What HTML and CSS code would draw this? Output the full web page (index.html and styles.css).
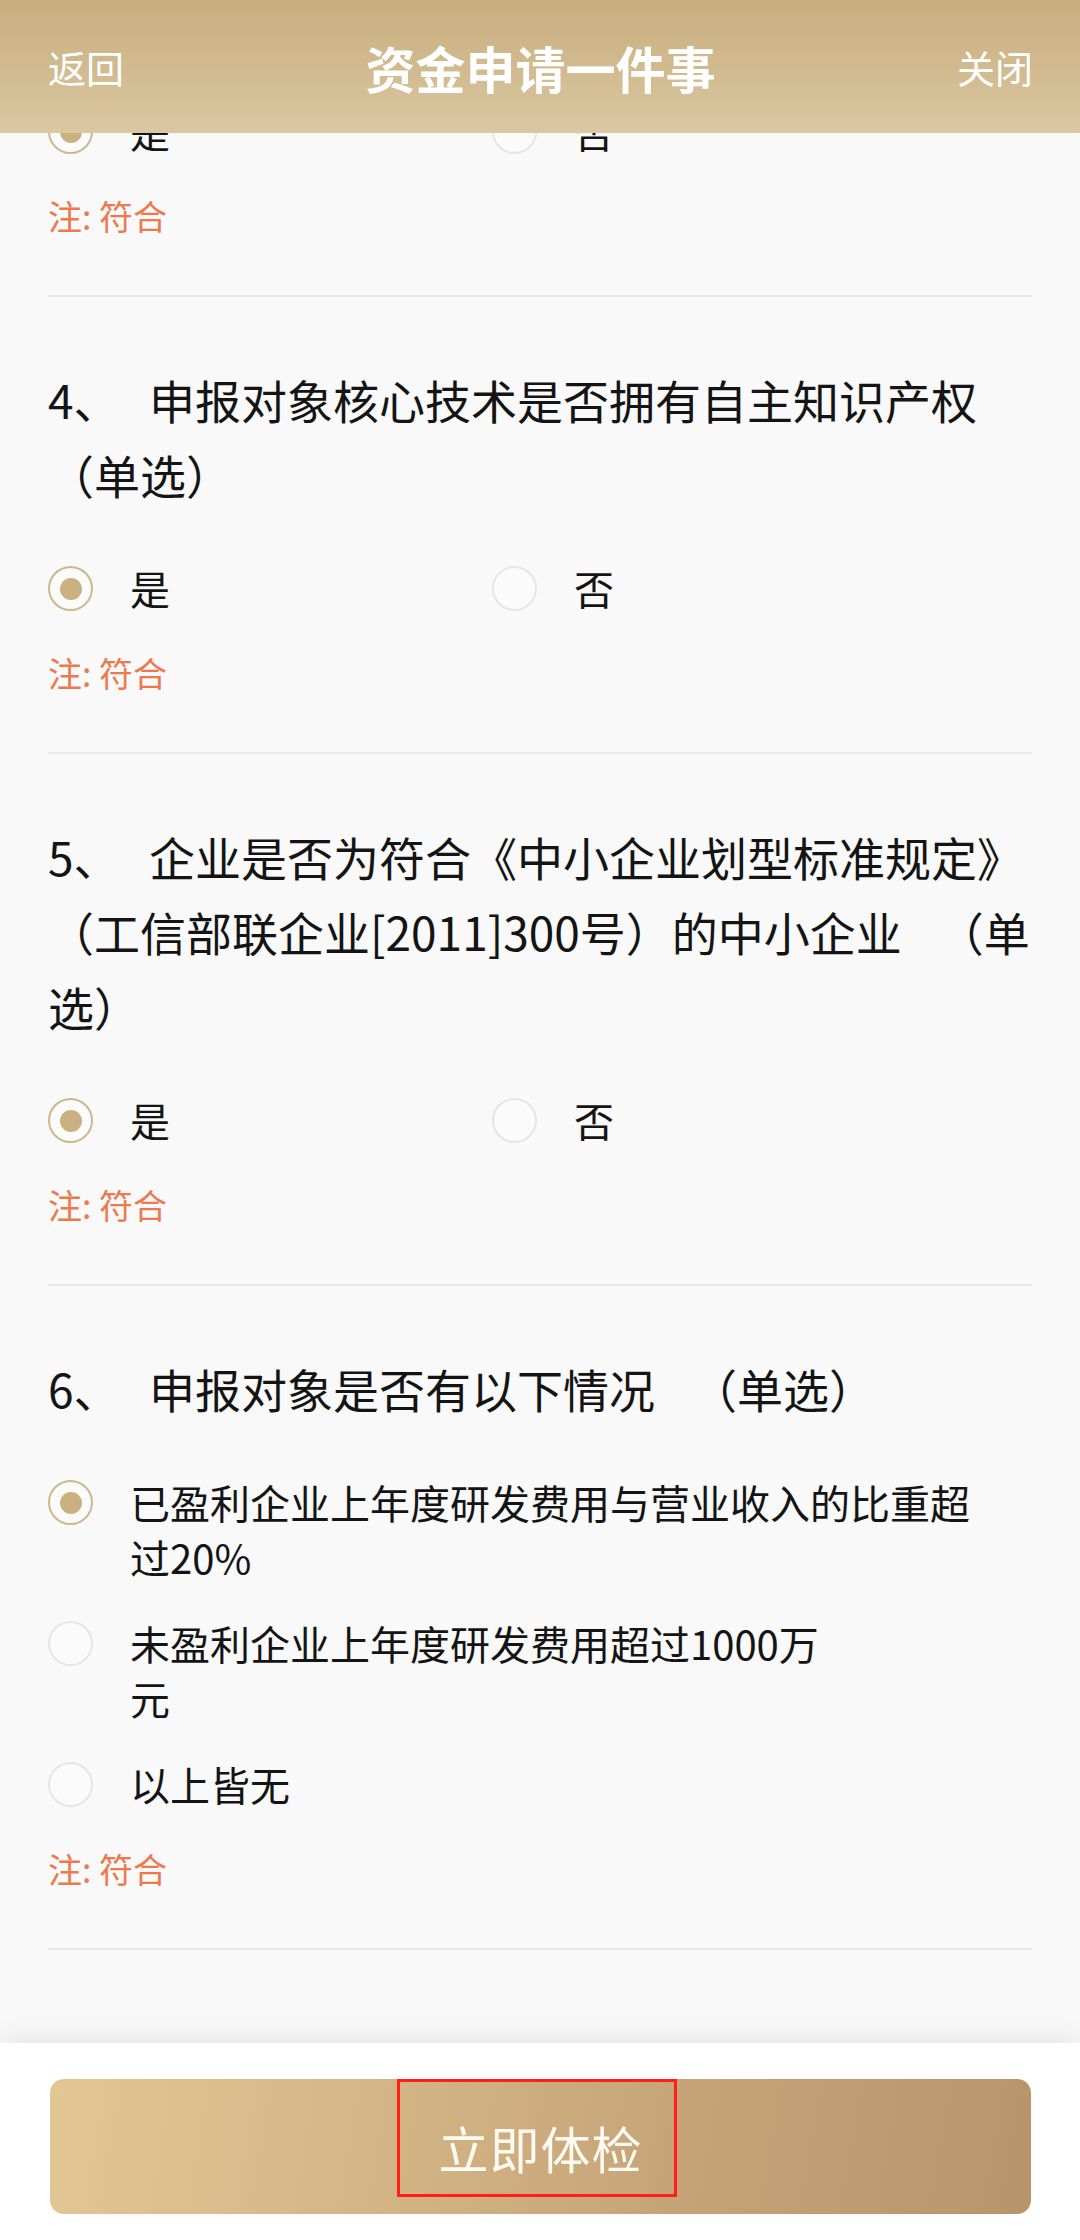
FILE: index.html
```html
<!DOCTYPE html>
<html lang="zh-CN">
<head>
<meta charset="utf-8">
<title>资金申请一件事</title>
<link rel="stylesheet" href="styles.css">
</head>
<body>
<div class="page">
  <header class="topbar">
    <span class="nav-btn">返回</span>
    <h1 class="title">资金申请一件事</h1>
    <span class="nav-btn">关闭</span>
  </header>

  <main class="scroll">
    <section class="block partial">
      <div class="opts-row first-row">
        <div class="opt"><span class="radio on"></span><span class="label">是</span></div>
        <div class="opt"><span class="radio"></span><span class="label">否</span></div>
      </div>
      <p class="note">注: 符合</p>
    </section>

    <section class="block">
      <h2 class="q"><span class="num">4、</span>申报对象核心技术是否拥有自主知识产权<br>（单选）</h2>
      <div class="opts-row">
        <div class="opt"><span class="radio on"></span><span class="label">是</span></div>
        <div class="opt"><span class="radio"></span><span class="label">否</span></div>
      </div>
      <p class="note">注: 符合</p>
    </section>

    <section class="block">
      <h2 class="q"><span class="num">5、</span>企业是否为符合《中小企业划型标准规定》<br>（工信部联企业[2011]300号）的中小企业<span class="gap"></span>（单<br>选）</h2>
      <div class="opts-row">
        <div class="opt"><span class="radio on"></span><span class="label">是</span></div>
        <div class="opt"><span class="radio"></span><span class="label">否</span></div>
      </div>
      <p class="note">注: 符合</p>
    </section>

    <section class="block">
      <h2 class="q"><span class="num">6、</span>申报对象是否有以下情况<span class="gap"></span>（单选）</h2>
      <div class="opts-col">
        <div class="opt"><span class="radio on"></span><span class="label">已盈利企业上年度研发费用与营业收入的比重超<br>过20%</span></div>
        <div class="opt"><span class="radio"></span><span class="label">未盈利企业上年度研发费用超过1000万<br>元</span></div>
        <div class="opt"><span class="radio"></span><span class="label">以上皆无</span></div>
      </div>
      <p class="note">注: 符合</p>
    </section>
  </main>

  <footer class="footer">
    <div class="cta">
      <span class="cta-text">立即体检</span>
      <span class="mark"></span>
    </div>
  </footer>
</div>
</body>
</html>
```

FILE: styles.css
```css
* { box-sizing: border-box; }

html, body {
  margin: 0;
  padding: 0;
}

body {
  width: 1080px;
  height: 2240px;
  overflow: hidden;
  background: #f9f9f9;
  font-family: "Noto Sans CJK SC", "Noto Sans", "Liberation Sans", sans-serif;
  color: #141414;
}

.page {
  display: flex;
  flex-direction: column;
  height: 2240px;
}

.topbar {
  flex: 0 0 133px;
  height: 133px;
  display: flex;
  align-items: center;
  justify-content: space-between;
  padding: 0 47px 0 48px;
  background: linear-gradient(180deg, #c8af7f 0%, #d2bb90 55%, #dbc7a3 100%);
  color: #fff;
  position: relative;
  z-index: 2;
}

.nav-btn {
  font-size: 38px;
  line-height: 1;
  width: 80px;
}
.nav-btn:last-child { text-align: right; }

.title {
  margin: 0;
  font-size: 50px;
  font-weight: 700;
  line-height: 1;
  letter-spacing: 0;
}

.scroll {
  flex: 1 1 auto;
  overflow: hidden;
  padding: 0 48px;
}

.block {
  border-bottom: 2px solid #e9e9e9;
  padding: 65px 0 55px;
}

.block.partial {
  padding-top: 0;
}

.q {
  margin: 0;
  font-size: 46px;
  font-weight: 400;
  line-height: 75px;
  color: #141414;
}

.num {
  display: inline-block;
  width: 101px;
}

.gap {
  display: inline-block;
  width: 36px;
}

.opts-row {
  display: grid;
  grid-template-columns: 444px 1fr;
  margin-top: 49px;
}

.opts-row.first-row {
  margin-top: -29px;
}

.opts-col {
  display: flex;
  flex-direction: column;
  gap: 31px;
  margin-top: 49px;
}

.opt {
  display: flex;
  align-items: flex-start;
}

.radio {
  flex: 0 0 45px;
  width: 45px;
  height: 45px;
  margin-top: 5px;
  border-radius: 50%;
  border: 2px solid #e6e6e6;
  background: #fbfbfb;
  display: flex;
  align-items: center;
  justify-content: center;
}

.radio.on {
  border-color: #cdb88d;
}

.radio.on::after {
  content: "";
  width: 22px;
  height: 22px;
  border-radius: 50%;
  background: #c9b27f;
}

.label {
  margin-left: 37px;
  font-size: 40px;
  line-height: 55px;
  color: #141414;
}

.note {
  margin: 33px 0 0;
  font-size: 34px;
  line-height: 48px;
  color: #ec7a4e;
}

.footer {
  flex: 0 0 197px;
  height: 197px;
  background: #fff;
  box-shadow: 0 -8px 24px rgba(0, 0, 0, 0.07);
  padding: 36px 49px 0 50px;
  position: relative;
  z-index: 2;
}

.cta {
  position: relative;
  height: 135px;
  border-radius: 14px;
  background: linear-gradient(100deg, #e1c794 0%, #d3b585 35%, #c5a377 65%, #b8946a 100%);
  display: flex;
  align-items: center;
  justify-content: center;
}

.cta-text {
  font-size: 50px;
  color: #fffaf2;
  line-height: 1;
  letter-spacing: 1px;
}

.mark {
  position: absolute;
  left: 347px;
  top: 0;
  width: 280px;
  height: 118px;
  border: 3px solid #ff1f14;
}
```
